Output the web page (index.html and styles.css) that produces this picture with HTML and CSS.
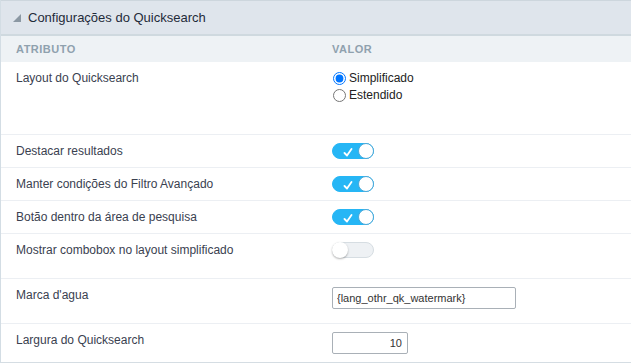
FILE: index.html
```html
<!DOCTYPE html>
<html lang="pt-BR">

<head>
    <meta charset="UTF-8" />
    <meta name="viewport" content="width=device-width, initial-scale=1.0" />
    <title>Configurações do Quicksearch</title>
    <link rel="stylesheet" href="styles.css">
</head>

<body>
    <div class="panel">
        <div class="panel-title">
            <svg class="caret" width="8" height="8" viewBox="0 0 8 8"><polygon points="8,0 8,8 0,8" /></svg>
            <span>Configurações do Quicksearch</span>
        </div>

        <div class="row col-head">
            <div>Atributo</div>
            <div>Valor</div>
        </div>

        <div class="row row-layout">
            <div class="label">Layout do Quicksearch</div>
            <div class="value">
                <label class="radio"><input type="radio" name="layout" checked> Simplificado</label>
                <label class="radio"><input type="radio" name="layout"> Estendido</label>
            </div>
        </div>

        <div class="row">
            <div class="label">Destacar resultados</div>
            <div class="value"><span class="toggle on"><svg class="check" width="10" height="9" viewBox="0 0 10 9"><path d="M1.5 5 L4 7.5 L8.5 1" /></svg><span class="knob"></span></span></div>
        </div>

        <div class="row">
            <div class="label">Manter condições do Filtro Avançado</div>
            <div class="value"><span class="toggle on"><svg class="check" width="10" height="9" viewBox="0 0 10 9"><path d="M1.5 5 L4 7.5 L8.5 1" /></svg><span class="knob"></span></span></div>
        </div>

        <div class="row">
            <div class="label">Botão dentro da área de pesquisa</div>
            <div class="value"><span class="toggle on"><svg class="check" width="10" height="9" viewBox="0 0 10 9"><path d="M1.5 5 L4 7.5 L8.5 1" /></svg><span class="knob"></span></span></div>
        </div>

        <div class="row row-combo">
            <div class="label">Mostrar combobox no layout simplificado</div>
            <div class="value"><span class="toggle"><span class="knob"></span></span></div>
        </div>

        <div class="row row-mark">
            <div class="label">Marca d'agua</div>
            <div class="value"><input class="field field-wide" type="text" value="{lang_othr_qk_watermark}"></div>
        </div>

        <div class="row row-last">
            <div class="label">Largura do Quicksearch</div>
            <div class="value"><input class="field field-num" type="text" value="10"></div>
        </div>
    </div>
</body>

</html>
```

FILE: styles.css
```css
body {
    margin: 0;
    font-family: "Liberation Sans", Arial, sans-serif;
    background-color: #fff;
    color: #3a4150;
}

.panel {
    border-left: 1px solid #d3dde4;
}

.panel-title {
    display: flex;
    align-items: center;
    gap: 7px;
    height: 33px;
    padding-left: 12px;
    background-color: #dfe5ec;
    border-top: 1px solid #cdd6dd;
    border-bottom: 2px solid #cfd9df;
    font-size: 13px;
    color: #1f2b3a;
}

.caret {
    fill: #8b98a3;
    margin-top: 1px;
}

.row {
    display: grid;
    grid-template-columns: 316px 1fr;
    padding: 8px 15px;
    border-bottom: 1px solid #eceff3;
    font-size: 12px;
    line-height: 16px;
}

.col-head {
    height: 26px;
    padding-top: 0;
    padding-bottom: 0;
    align-items: center;
    border-bottom: none;
    background-color: #eef2f5;
    font-size: 11px;
    font-weight: bold;
    letter-spacing: 0.5px;
    text-transform: uppercase;
    color: #8fa1ae;
}

.row-layout {
    padding-bottom: 31px;
}

.row-combo {
    padding-bottom: 20px;
}

.row-mark {
    padding-bottom: 14px;
}

.row-last {
    border-bottom-color: #d5dde3;
}

.radio {
    display: flex;
    align-items: center;
    height: 16px;
    color: #222;
}

.radio + .radio {
    margin-top: 1px;
}

.radio input {
    margin: 0 3px 0 1px;
    width: 13px;
    height: 13px;
}

.toggle {
    position: relative;
    display: block;
    width: 42px;
    height: 16px;
    box-sizing: border-box;
    border-radius: 8px;
    background-color: #eef1f4;
    border: 1px solid #d6dde2;
}

.toggle .knob {
    position: absolute;
    top: -1px;
    left: -1px;
    width: 16px;
    height: 16px;
    box-sizing: border-box;
    border-radius: 50%;
    background-color: #fff;
    box-shadow: 0 1px 2px rgba(0, 0, 0, 0.3);
}

.toggle.on {
    background-color: #26b6f5;
    border-color: #26b6f5;
}

.toggle.on .knob {
    left: auto;
    right: -1px;
    border: 1px solid #4aa8d8;
    box-shadow: none;
}

.check {
    position: absolute;
    left: 10px;
    top: 4px;
}

.check path {
    fill: none;
    stroke: #fff;
    stroke-width: 1.8;
    stroke-linecap: round;
    stroke-linejoin: round;
}

.field {
    display: block;
    box-sizing: border-box;
    height: 22px;
    margin: 0;
    padding: 0 4px;
    border: 1px solid #a9b0b7;
    border-radius: 2px;
    font-family: "Liberation Sans", Arial, sans-serif;
    font-size: 11px;
    color: #333;
}

.field-wide {
    width: 184px;
}

.field-num {
    width: 76px;
    padding-right: 5px;
    text-align: right;
}
```
